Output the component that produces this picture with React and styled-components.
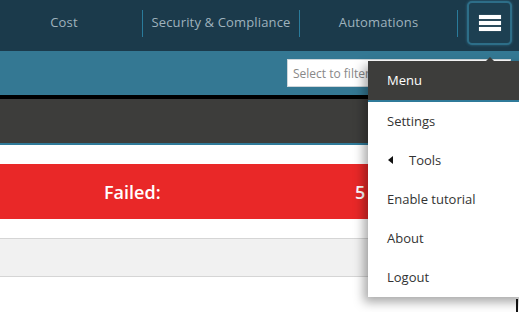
import React from "react";
import styled, { createGlobalStyle } from "styled-components";

const Global = createGlobalStyle`
  html, body { margin: 0; padding: 0; background: #fff; overflow: hidden; }
  body { font-family: "Open Sans", "Liberation Sans", sans-serif; }
  * { box-sizing: border-box; }
`;

const Page = styled.div`
  position: relative;
  width: 519px;
  height: 312px;
  overflow: hidden;
  background: #fff;
`;

const Header = styled.header`
  height: 51px;
  background: #1b3a4b;
  display: flex;
  align-items: flex-start;
  padding-right: 7px;
`;

const Nav = styled.nav`
  display: flex;
  align-items: center;
  margin-left: -14px;
  margin-top: 10px;
  flex: 1;
`;

const NavItem = styled.div`
  width: ${(p) => p.$w}px;
  height: 27px;
  padding-bottom: 3px;
  display: flex;
  align-items: center;
  justify-content: center;
  color: #9fb2bd;
  font-size: 13px;
  letter-spacing: 0.15px;
  border-right: 1px solid #2a7b9b;
  white-space: nowrap;
`;

const MenuButton = styled.button`
  width: 45px;
  height: 44px;
  margin-top: 1px;
  border: 2px solid #2d6e88;
  border-radius: 5px;
  background: #1d4052;
  box-shadow: 0 0 3px rgba(60, 140, 170, 0.6);
  display: flex;
  flex-direction: column;
  align-items: center;
  justify-content: center;
  gap: 2px;
  padding: 0;
`;

const Bar = styled.span`
  display: block;
  width: 22px;
  height: 4px;
  background: #fff;
  box-shadow: 0 0 1px rgba(255, 255, 255, 0.6);
`;

const SubBar = styled.div`
  height: 44px;
  background: #347893;
  display: flex;
  align-items: center;
  padding-left: 287px;
  padding-right: 8px;
`;

const Filter = styled.div`
  flex: 1;
  height: 28px;
  background: #fff;
  border: 1px solid #cfd6da;
  display: flex;
  align-items: center;
  padding-left: 5px;
  color: #888;
  font-size: 12px;
  white-space: nowrap;
  overflow: hidden;
`;

const BlackStrip = styled.div`
  height: 4px;
  background: #000;
`;

const DarkBand = styled.div`
  height: 46px;
  background: #3d3d3b;
  border-bottom: 2px solid #2f7a99;
`;

const Gap = styled.div`
  height: ${(p) => p.$h}px;
`;

const FailedBar = styled.div`
  height: 55px;
  background: #e92828;
  display: flex;
  align-items: center;
  color: #fff;
  font-size: 18px;
  font-weight: 600;
`;

const FailedLabel = styled.span`
  margin-left: 104px;
  width: 251px;
`;

const GrayRow = styled.div`
  height: 39px;
  background: #f1f1f1;
  border-top: 1px solid #d5d5d5;
  border-bottom: 1px solid #d5d5d5;
`;

const Dropdown = styled.div`
  position: absolute;
  left: 368px;
  top: 61px;
  width: 160px;
  background: #fff;
  box-shadow: -4px 5px 10px rgba(0, 0, 0, 0.35);
`;

const Arrow = styled.div`
  position: absolute;
  top: -4px;
  left: 118px;
  width: 0;
  height: 0;
  border-left: 4px solid transparent;
  border-right: 4px solid transparent;
  border-bottom: 4px solid #3d3d3b;
`;

const DropHeader = styled.div`
  height: 41px;
  background: #3d3d3b;
  border-bottom: 2px solid #2f7a99;
  color: #fff;
  font-size: 13px;
  display: flex;
  align-items: center;
  padding-left: 19px;
  padding-bottom: 1px;
`;

const DropItem = styled.div`
  height: 39px;
  display: flex;
  align-items: center;
  padding-left: 19px;
  padding-bottom: 1px;
  color: #333;
  font-size: 13px;
`;

const Caret = styled.span`
  width: 0;
  height: 0;
  border-top: 4px solid transparent;
  border-bottom: 4px solid transparent;
  border-right: 5px solid #111;
  margin-left: 1px;
  margin-right: 16px;
`;

const EdgeMark = styled.div`
  position: absolute;
  left: 516px;
  top: 299px;
  width: 2px;
  height: 13px;
  background: #111;
`;

export default function App() {
  const items = ["Settings", "Tools", "Enable tutorial", "About", "Logout"];
  return (
    <Page>
      <Global />
      <Header>
        <Nav>
          <NavItem $w={157}>Cost</NavItem>
          <NavItem $w={157}>Security &amp; Compliance</NavItem>
          <NavItem $w={158}>Automations</NavItem>
        </Nav>
        <MenuButton aria-label="menu">
          <Bar />
          <Bar />
          <Bar />
        </MenuButton>
      </Header>
      <SubBar>
        <Filter>Select to filter</Filter>
      </SubBar>
      <BlackStrip />
      <DarkBand />
      <Gap $h={19} />
      <FailedBar>
        <FailedLabel>Failed:</FailedLabel>
        <span>5</span>
      </FailedBar>
      <Gap $h={19} />
      <GrayRow />
      <Dropdown>
        <Arrow />
        <DropHeader>Menu</DropHeader>
        {items.map((t) => (
          <DropItem key={t}>
            {t === "Tools" && <Caret />}
            {t}
          </DropItem>
        ))}
      </Dropdown>
      <EdgeMark />
    </Page>
  );
}
